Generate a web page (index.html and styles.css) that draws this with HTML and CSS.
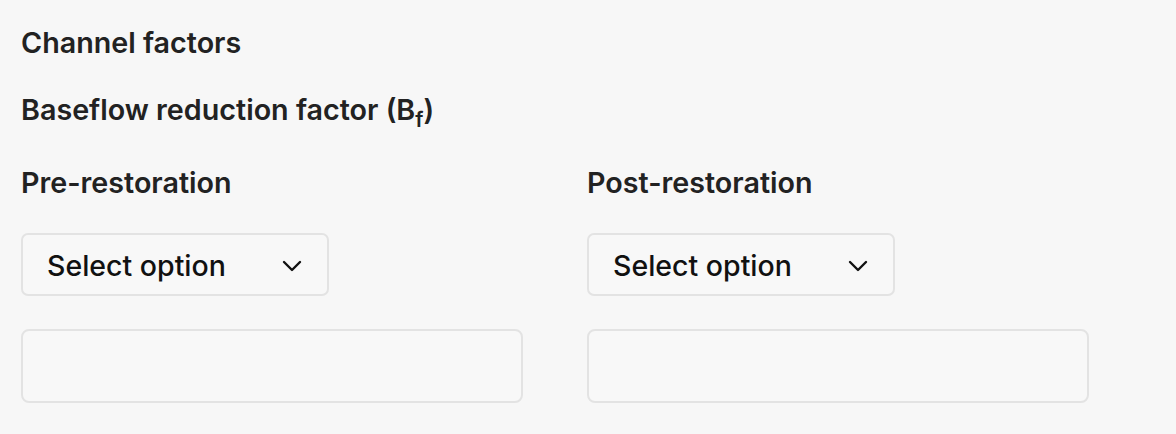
FILE: index.html
```html
<!DOCTYPE html>
<html lang="en">
<head>
<meta charset="utf-8">
<title>Channel factors</title>
<link rel="stylesheet" href="styles.css">
</head>
<body>
<main class="panel">
  <h2 class="title">Channel factors</h2>
  <h3 class="subtitle">Baseflow reduction factor (B<sub>f</sub>)</h3>
  <div class="columns">
    <section class="col">
      <div class="label">Pre-restoration</div>
      <button class="select" type="button">
        <span>Select option</span>
        <svg class="chev" width="20" height="12" viewBox="0 0 20 12"><path d="M2 2 L10 10 L18 2" fill="none" stroke="#111" stroke-width="2.4" stroke-linecap="round" stroke-linejoin="round"/></svg>
      </button>
      <div class="field"></div>
    </section>
    <section class="col">
      <div class="label">Post-restoration</div>
      <button class="select" type="button">
        <span>Select option</span>
        <svg class="chev" width="20" height="12" viewBox="0 0 20 12"><path d="M2 2 L10 10 L18 2" fill="none" stroke="#111" stroke-width="2.4" stroke-linecap="round" stroke-linejoin="round"/></svg>
      </button>
      <div class="field"></div>
    </section>
  </div>
</main>
</body>
</html>
```
FILE: styles.css
```css
html, body {
  margin: 0;
  padding: 0;
  background: #f7f7f7;
}
body {
  font-family: Inter, "Noto Sans", sans-serif;
  color: #222;
}
.panel {
  padding: 25px 21px 0 21px;
}
.title {
  margin: 0;
  font-size: 28.7px;
  line-height: 35px;
  font-weight: 600;
}
.subtitle {
  margin: 32px 0 0 0;
  font-size: 28.7px;
  line-height: 35px;
  font-weight: 600;
}
.subtitle sub {
  font-size: 21px;
  line-height: 0;
  vertical-align: -7px;
}
.columns {
  display: grid;
  grid-template-columns: 534px 534px;
  column-gap: 32px;
  margin-top: 38px;
}
.col {
  display: flex;
  flex-direction: column;
  align-items: flex-start;
}
.label {
  font-size: 28.7px;
  line-height: 35px;
  font-weight: 600;
}
.select {
  margin-top: 33px;
  box-sizing: border-box;
  width: 308px;
  height: 63px;
  border: 2px solid #e3e3e3;
  border-radius: 7px;
  background: #f8f8f8;
  display: flex;
  align-items: center;
  justify-content: space-between;
  padding: 2px 25px 0 24px;
  font-family: Inter, "Noto Sans", sans-serif;
  font-size: 28.5px;
  line-height: 35px;
  font-weight: 500;
  color: #111;
}
.field {
  margin-top: 33px;
  box-sizing: border-box;
  width: 502px;
  height: 74px;
  border: 2px solid #e3e3e3;
  border-radius: 8px;
  background: #f8f8f8;
}
```
